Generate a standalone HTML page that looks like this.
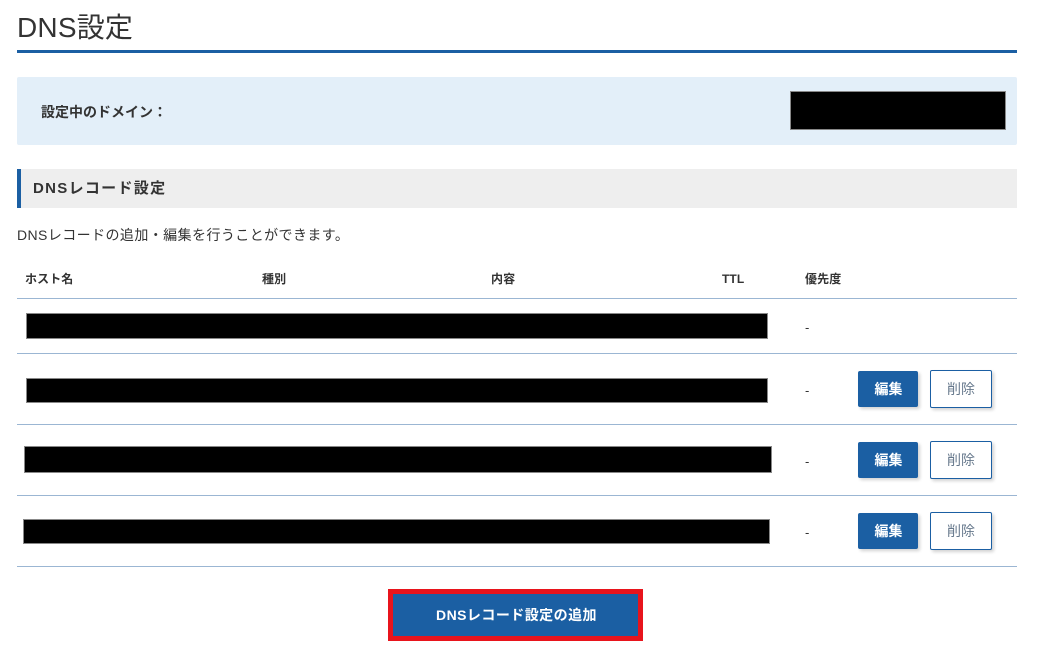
<!DOCTYPE html>
<html lang="ja">
<head>
<meta charset="utf-8">
<style>
html,body{margin:0;padding:0;background:#fff;width:1038px;height:647px;overflow:hidden}
body{position:relative;font-family:"Liberation Sans","Noto Sans CJK JP",sans-serif;color:#333}
.a{position:absolute;white-space:nowrap}
.line{position:absolute;left:17px;width:1000px;height:1px;background:#9bb6d3}
.bar{position:absolute;background:#000;border:1px solid #888;box-sizing:border-box}
.th{position:absolute;top:271px;line-height:16px;font-size:12px;font-weight:bold;white-space:nowrap;color:#333;letter-spacing:.1px}
.dash{position:absolute;left:805px;font-size:13px;line-height:16px;color:#333}
.edit{position:absolute;left:858px;width:60px;height:36px;background:#1b5fa3;border-radius:2px;color:#fff;font-size:14px;font-weight:bold;line-height:36px;text-align:center;box-shadow:2px 2px 3px rgba(0,0,0,.18);text-indent:1px}
.del{position:absolute;left:930px;width:62px;height:38px;box-sizing:border-box;background:#fff;border:1px solid #1b5fa3;border-radius:2px;color:#66788c;font-size:14px;line-height:36px;text-align:center;box-shadow:2px 2px 3px rgba(0,0,0,.18)}
</style>
</head>
<body>
<div class="a" style="left:17px;top:10px;font-size:28px;line-height:36px;color:#333;letter-spacing:.2px">DNS設定</div>
<div class="a" style="left:17px;top:50px;width:1000px;height:3px;background:#1b5fa3"></div>

<div class="a" style="left:17px;top:77px;width:1000px;height:68px;background:#e3eff9;border-radius:2px"></div>
<div class="a" style="left:41px;top:104px;font-size:14px;line-height:16px;font-weight:bold;color:#333">設定中のドメイン：</div>
<div class="bar" style="left:790px;top:91px;width:216px;height:39px"></div>

<div class="a" style="left:17px;top:169px;width:1000px;height:39px;background:#eee"></div>
<div class="a" style="left:17px;top:169px;width:4px;height:39px;background:#1b5fa3"></div>
<div class="a" style="left:33px;top:181px;font-size:15px;line-height:16px;font-weight:bold;color:#333;letter-spacing:1.3px">DNSレコード設定</div>

<div class="a" style="left:17px;top:227px;font-size:14px;line-height:16px;color:#333;letter-spacing:.42px">DNSレコードの追加・編集を行うことができます。</div>

<div class="th" style="left:25px">ホスト名</div>
<div class="th" style="left:262px">種別</div>
<div class="th" style="left:491px">内容</div>
<div class="th" style="left:722px">TTL</div>
<div class="th" style="left:805px">優先度</div>

<div class="line" style="top:298px"></div>
<div class="line" style="top:353px"></div>
<div class="line" style="top:424px"></div>
<div class="line" style="top:495px"></div>
<div class="line" style="top:566px"></div>

<div class="bar" style="left:26px;top:313px;width:742px;height:26px"></div>
<div class="bar" style="left:26px;top:378px;width:742px;height:25px"></div>
<div class="bar" style="left:24px;top:446px;width:748px;height:27px"></div>
<div class="bar" style="left:23px;top:519px;width:747px;height:25px"></div>

<div class="dash" style="top:320px">-</div>
<div class="dash" style="top:383px">-</div>
<div class="dash" style="top:454px">-</div>
<div class="dash" style="top:525px">-</div>

<div class="edit" style="top:371px">編集</div>
<div class="del" style="top:370px">削除</div>
<div class="edit" style="top:442px">編集</div>
<div class="del" style="top:441px">削除</div>
<div class="edit" style="top:513px">編集</div>
<div class="del" style="top:512px">削除</div>

<div class="a" style="left:388px;top:589px;width:255px;height:52px;box-sizing:border-box;border:5px solid #e8141c;background:#1b5fa3;color:#fff;font-size:14px;font-weight:bold;line-height:42px;text-align:center;letter-spacing:.45px;text-indent:2px">DNSレコード設定の追加</div>
</body>
</html>
